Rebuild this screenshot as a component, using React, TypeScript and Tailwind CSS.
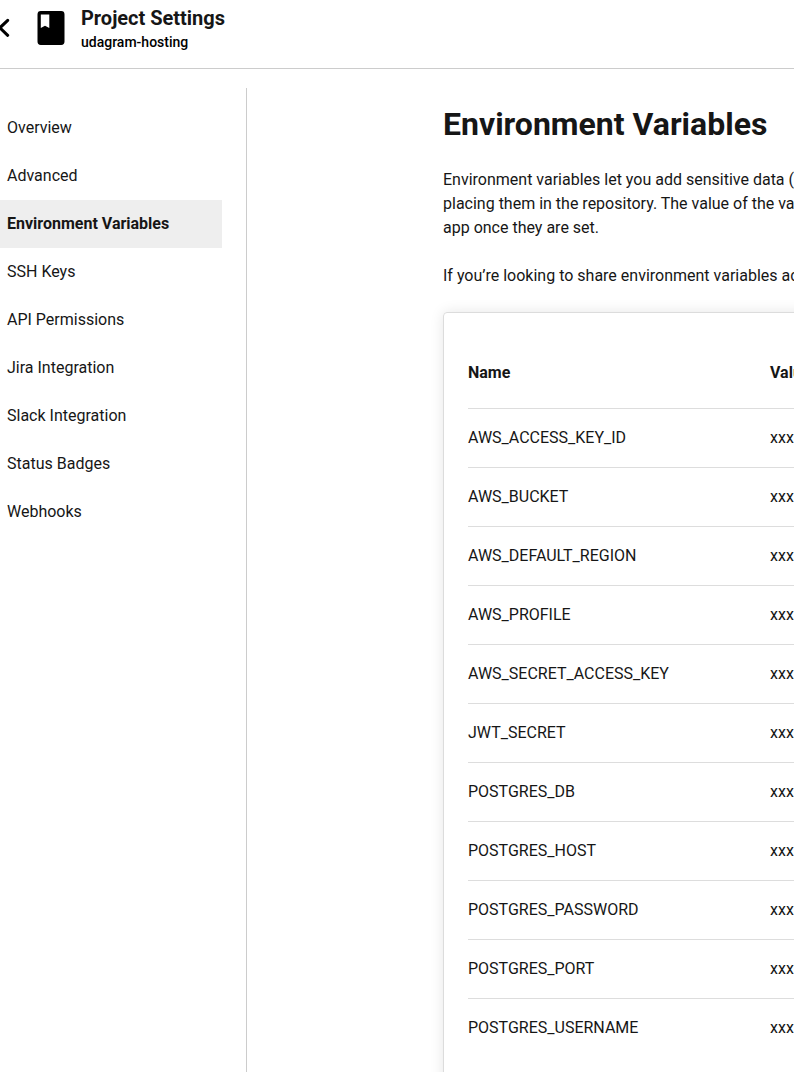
const navItems = [
  'Overview',
  'Advanced',
  'Environment Variables',
  'SSH Keys',
  'API Permissions',
  'Jira Integration',
  'Slack Integration',
  'Status Badges',
  'Webhooks',
];

const variables = [
  'AWS_ACCESS_KEY_ID',
  'AWS_BUCKET',
  'AWS_DEFAULT_REGION',
  'AWS_PROFILE',
  'AWS_SECRET_ACCESS_KEY',
  'JWT_SECRET',
  'POSTGRES_DB',
  'POSTGRES_HOST',
  'POSTGRES_PASSWORD',
  'POSTGRES_PORT',
  'POSTGRES_USERNAME',
];

function Header() {
  return (
    <header className="flex h-[69px] shrink-0 border-b border-[#cccccc]">
      <svg className="mt-[18px] h-5 w-[10px] shrink-0" viewBox="0 0 10 20" fill="none">
        <path d="M7.7 2.3 L-0.1 9.8 L7.7 17.3" stroke="#000" strokeWidth="3" strokeLinecap="round" />
      </svg>
      <svg className="mt-[11px] ml-[27px] h-[34px] w-7 shrink-0" viewBox="0 0 28 34">
        <path
          fill="#000"
          fillRule="evenodd"
          d="M3.8 0 H24.2 Q27.5 0 27.5 3.4 V30.6 Q27.5 34 24.2 34 H3.8 Q0.5 34 0.5 30.6 V3.4 Q0.5 0 3.8 0 Z M3.8 3.4 V17 L8 14.7 L12.3 17 V3.4 Z"
        />
      </svg>
      <div className="ml-4 pt-1.5">
        <h2 className="text-[20px] leading-6 font-bold tracking-[-0.02px]">Project Settings</h2>
        <p className="mt-0.5 text-sm leading-5 font-medium text-black">udagram-hosting</p>
      </div>
    </header>
  );
}

function Sidebar() {
  return (
    <nav className="mt-[19px] w-[247px] shrink-0 border-r border-[#cccccc] pt-4 pr-6">
      {navItems.map((item) => (
        <a
          key={item}
          className={
            item === 'Environment Variables'
              ? 'flex h-12 items-center bg-[#eeeeee] pl-[7px] font-bold'
              : 'flex h-12 items-center pl-[7px]'
          }
        >
          {item}
        </a>
      ))}
    </nav>
  );
}

function VariablesCard() {
  return (
    <section className="mt-6 h-[900px] w-[900px] rounded border border-[#dcdcdc] px-6 shadow-[0_0_14px_rgba(0,0,0,0.1)]">
      <div className="flex h-24 items-center border-b border-[#dddddd] pt-6 font-bold">
        <span className="w-[302px]">Name</span>
        <span>Value</span>
      </div>
      {variables.map((name) => (
        <div key={name} className="flex h-[59px] items-center border-b border-[#dddddd] last:border-transparent">
          <span className="w-[302px]">{name}</span>
          <span>xxx</span>
        </div>
      ))}
    </section>
  );
}

export default function App() {
  return (
    <div className="flex h-[1072px] w-full flex-col overflow-hidden bg-white font-[Roboto,sans-serif] text-base leading-6 text-[#161616]">
      <Header />
      <div className="flex min-h-0 flex-1">
        <Sidebar />
        <main className="ml-[196px] min-w-0 flex-1 pt-[35px] whitespace-nowrap">
          <h1 className="text-[32px] leading-10 font-bold">Environment Variables</h1>
          <p className="mt-6">
            Environment variables let you add sensitive data (e.g.
            <br />
            placing them in the repository. The value of the variables
            <br />
            app once they are set.
          </p>
          <p className="mt-6">If you’re looking to share environment variables across</p>
          <VariablesCard />
        </main>
      </div>
    </div>
  );
}
